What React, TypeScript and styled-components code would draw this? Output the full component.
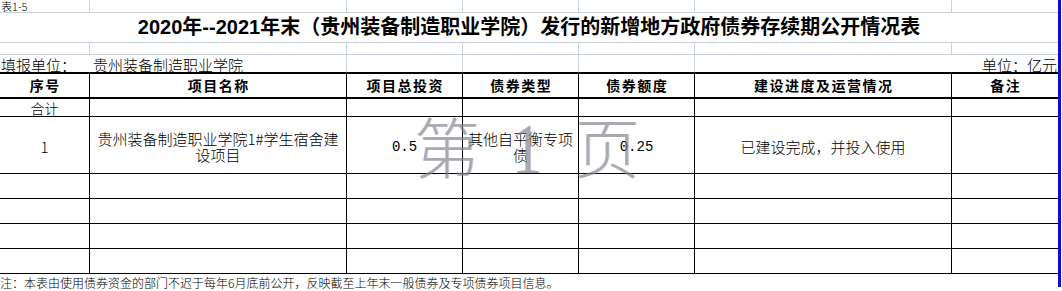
import React from "react";
import styled, { createGlobalStyle } from "styled-components";

type Line = "light" | "dark" | "none";

const COLS = "90px 257px 116px 116px 116px 257px 106px";
const LIGHT = "#c9d1df";
const CJK = `"Noto Sans CJK SC", "Liberation Sans", sans-serif`;

const GlobalStyle = createGlobalStyle`
    html, body {
        margin: 0;
        padding: 0;
        background: #ffffff;
    }
    body {
        font-family: ${CJK};
        color: #000000;
    }
`;

const Page = styled.div<{}>`
    display: flex;
    width: 1062px;
    height: 291px;
    overflow: hidden;
`;

const Sheet = styled.div<{}>`
    position: relative;
    width: 1058px;
    display: flex;
    flex-direction: column;
`;

const PageBreak = styled.div<{}>`
    width: 3px;
    height: 287px;
    background: #0b0bd6;
`;

const Row = styled.div<{ $h: number; $bottom?: Line; $thick?: boolean }>`
    display: grid;
    grid-template-columns: ${COLS};
    height: ${(p) => p.$h}px;
    box-sizing: border-box;
    ${(p) => (p.$bottom === "light" ? `border-bottom: 1px solid ${LIGHT};` : null)}
    ${(p) => (p.$bottom === "dark" ? "border-bottom: 1px solid #000;" : null)}
    ${(p) => (p.$thick ? "border-top: 2px solid #000; border-bottom: 2px solid #000;" : null)}
`;

const Cell = styled.div<{
    $line?: Line;
    $span?: number;
    $align?: "left" | "center" | "right";
    $bold?: boolean;
}>`
    box-sizing: border-box;
    display: flex;
    align-items: center;
    justify-content: ${(p) => (p.$align === "left" ? "flex-start" : p.$align === "right" ? "flex-end" : "center")};
    text-align: ${(p) => p.$align || "center"};
    grid-column: span ${(p) => p.$span || 1};
    white-space: nowrap;
    font-size: 15px;
    line-height: 16px;
    font-weight: ${(p) => (p.$bold ? 700 : 300)};
    border-right: ${(p) => (p.$line === "light" ? `1px solid ${LIGHT}` : p.$line === "dark" ? "1px solid #000" : "none")};
`;

const SheetLabel = styled.span<{}>`
    font-size: 11px;
    line-height: 12px;
    padding-left: 1px;
    align-self: flex-end;
`;

const Title = styled.span<{}>`
    font-family: "Liberation Sans", "Noto Sans CJK SC", sans-serif;
    font-size: 20px;
    font-weight: 700;
    line-height: 24px;
`;

const UnitText = styled.span<{ $pad?: number }>`
    padding-left: ${(p) => p.$pad || 0}px;
    padding-right: 1px;
    line-height: 15px;
    padding-top: 2px;
`;

const HeadText = styled.span<{}>`
    font-size: 14px;
    letter-spacing: 1.5px;
    padding-left: 1.5px;
`;

const BodyText = styled.span<{}>`
    padding-top: 3px;
`;

const NumText = styled.span<{}>`
    font-family: "Liberation Mono", monospace;
    font-size: 14px;
    padding-top: 3px;
`;

const SumText = styled.span<{}>`
    font-size: 14px;
    padding-top: 1px;
`;

const Note = styled.div<{}>`
    height: 16px;
    font-size: 12px;
    line-height: 16px;
    padding-top: 1px;
    font-weight: 300;
    white-space: nowrap;
`;

const Watermark = styled.div<{}>`
    position: absolute;
    left: 407px;
    top: 111px;
    display: flex;
    align-items: baseline;
    pointer-events: none;
    color: rgba(120, 122, 130, 0.55);
    text-shadow: 1px 0 0 rgba(160, 170, 190, 0.3);
`;

const WmGlyph = styled.span<{ $latin?: boolean }>`
    width: 80px;
    text-align: center;
    line-height: 1;
    font-family: ${(p) => (p.$latin ? `"Liberation Serif", "DejaVu Serif", serif` : `"Noto Sans CJK SC", sans-serif`)};
    font-size: ${(p) => (p.$latin ? 72 : 66)}px;
    font-weight: ${(p) => (p.$latin ? 400 : 300)};
    ${(p) => (p.$latin ? "transform: scaleX(0.85);" : null)}
`;

const HEADERS = ["序号", "项目名称", "项目总投资", "债券类型", "债券额度", "建设进度及运营情况", "备注"];

const GridCells: React.FC<{ line: Line }> = ({ line }) => (
    <>
        {HEADERS.map((h, i) => (
            <Cell key={h} $line={i === HEADERS.length - 1 ? "none" : line} />
        ))}
    </>
);

export default function App() {
    return (
        <>
            <GlobalStyle />
            <Page>
                <Sheet>
                    <Row $h={13} $bottom="light">
                        <Cell $line="light" $align="left">
                            <SheetLabel>表1-5</SheetLabel>
                        </Cell>
                        <Cell $line="light" />
                        <Cell $line="light" />
                        <Cell $line="light" />
                        <Cell $line="light" />
                        <Cell $line="light" />
                        <Cell />
                    </Row>
                    <Row $h={30} $bottom="light">
                        <Cell $span={7}>
                            <Title>2020年--2021年末（贵州装备制造职业学院）发行的新增地方政府债券存续期公开情况表</Title>
                        </Cell>
                    </Row>
                    <Row $h={12} $bottom="light">
                        <GridCells line="light" />
                    </Row>
                    <Row $h={17}>
                        <Cell $align="left">
                            <UnitText $pad={1}>填报单位：</UnitText>
                        </Cell>
                        <Cell $line="light" $align="left">
                            <UnitText $pad={3}>贵州装备制造职业学院</UnitText>
                        </Cell>
                        <Cell $line="light" />
                        <Cell $line="light" />
                        <Cell $line="light" />
                        <Cell $span={2} $align="right">
                            <UnitText>单位：亿元</UnitText>
                        </Cell>
                    </Row>
                    <Row $h={27} $thick>
                        {HEADERS.map((h, i) => (
                            <Cell key={h} $line={i === HEADERS.length - 1 ? "none" : "dark"} $bold>
                                <HeadText>{h}</HeadText>
                            </Cell>
                        ))}
                    </Row>
                    <Row $h={18} $bottom="dark">
                        <Cell $line="dark">
                            <SumText>合计</SumText>
                        </Cell>
                        <Cell $line="dark" />
                        <Cell $line="dark" />
                        <Cell $line="dark" />
                        <Cell $line="dark" />
                        <Cell $line="dark" />
                        <Cell />
                    </Row>
                    <Row $h={58} $bottom="dark">
                        <Cell $line="dark">
                            <BodyText>1</BodyText>
                        </Cell>
                        <Cell $line="dark">
                            <BodyText>
                                贵州装备制造职业学院1#学生宿舍建
                                <br />
                                设项目
                            </BodyText>
                        </Cell>
                        <Cell $line="dark">
                            <NumText>0.5</NumText>
                        </Cell>
                        <Cell $line="dark">
                            <BodyText>
                                其他自平衡专项
                                <br />
                                债
                            </BodyText>
                        </Cell>
                        <Cell $line="dark">
                            <NumText>0.25</NumText>
                        </Cell>
                        <Cell $line="dark">
                            <BodyText>已建设完成，并投入使用</BodyText>
                        </Cell>
                        <Cell />
                    </Row>
                    {[0, 1, 2, 3].map((r) => (
                        <Row key={r} $h={25} $bottom="dark">
                            <GridCells line="dark" />
                        </Row>
                    ))}
                    <Note>注：本表由使用债券资金的部门不迟于每年6月底前公开，反映截至上年末一般债券及专项债券项目信息。</Note>
                    <Watermark>
                        <WmGlyph>第</WmGlyph>
                        <WmGlyph $latin>1</WmGlyph>
                        <WmGlyph>页</WmGlyph>
                    </Watermark>
                </Sheet>
                <PageBreak />
            </Page>
        </>
    );
}
